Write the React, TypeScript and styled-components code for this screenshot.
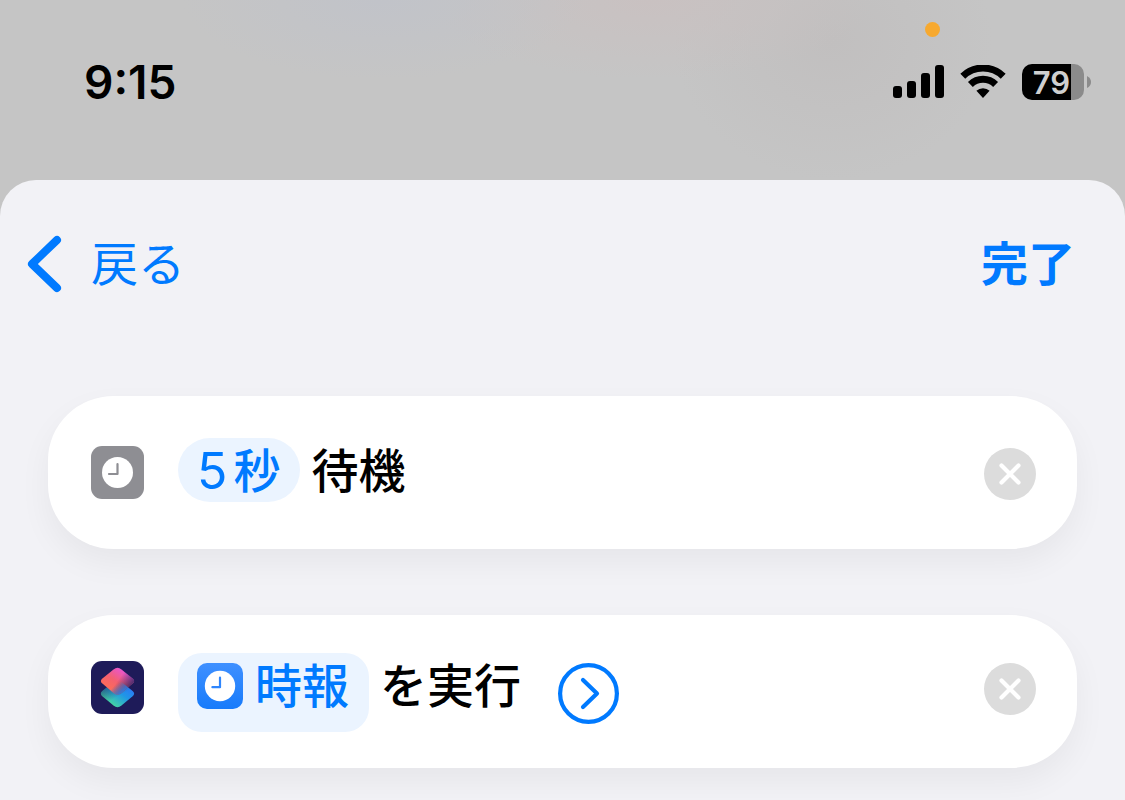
import React from "react";
import styled, { createGlobalStyle } from "styled-components";

const BLUE = "#007aff";

const GlobalStyle = createGlobalStyle`
  *, *::before, *::after { box-sizing: border-box; }
  body {
    margin: 0;
    background: #c5c5c5;
    font-family: Inter, "Noto Sans CJK JP", sans-serif;
    color: #000;
  }
  button { font: inherit; border: 0; padding: 0; background: none; cursor: pointer; }
  svg { display: block; }
`;

const Screen = styled.div`
  display: flex;
  flex-direction: column;
  min-height: 100vh;
  overflow: hidden;
  background:
    radial-gradient(ellipse 200px 80px at 34% 0, #c1c3c9, transparent),
    radial-gradient(ellipse 220px 80px at 58% 0, #c9c1c1, transparent),
    radial-gradient(ellipse 160px 140px at 74% 40px, #c1bfbf, transparent),
    #c5c5c5;
`;

const StatusBar = styled.header`
  position: relative;
  display: flex;
  justify-content: space-between;
  height: 180px;
  padding: 56px 34px 0 84px;
`;

const Time = styled.time`
  font-size: 46px;
  line-height: 52px;
  font-weight: 600;
`;

const StatusIcons = styled.div`
  display: flex;
  align-items: center;
  gap: 16px;
  height: 52px;
`;

const Battery = styled.div`
  display: flex;
  align-items: center;
  gap: 3px;
`;

const BatteryBody = styled.div`
  width: 62px;
  height: 36px;
  padding-right: 3px;
  border-radius: 10px;
  background: linear-gradient(to right, #000 49px, #8b8b8b 49px);
  color: #cfcfcf;
  font-size: 31px;
  line-height: 37px;
  font-weight: 600;
  text-align: center;
`;

const MicDot = styled.span`
  position: absolute;
  top: 22px;
  right: 185px;
  width: 15px;
  height: 15px;
  border-radius: 50%;
  background: #f7a92f;
`;

const Sheet = styled.main`
  flex: 1;
  border-radius: 36px 36px 0 0;
  background: #f2f2f6;
`;

const NavBar = styled.nav`
  display: flex;
  align-items: center;
  justify-content: space-between;
  height: 168px;
  padding: 0 50px 0 26px;
`;

const NavButton = styled.button<{ $strong?: boolean }>`
  display: flex;
  align-items: center;
  gap: 28px;
  color: ${BLUE};
  font-size: 47px;
  line-height: 64px;
  font-weight: ${(p) => (p.$strong ? 700 : 400)};
`;

const ActionList = styled.ul`
  display: flex;
  flex-direction: column;
  gap: 66px;
  margin: 0;
  padding: 48px 48px 32px;
  list-style: none;
`;

const ActionCard = styled.li<{ $top: number }>`
  display: flex;
  align-items: flex-start;
  min-height: 153px;
  padding: ${(p) => p.$top}px 41px 0 43px;
  border-radius: 66px / 64px;
  background: #fff;
  box-shadow: 0 14px 32px rgba(0, 0, 0, 0.05);
`;

const AppIcon = styled.span`
  margin: 8px 34px 0 0;
`;

const Sentence = styled.div`
  display: flex;
  flex: 1;
  align-items: flex-start;
  gap: 11px;
  font-size: 47px;
  line-height: 66px;
  font-weight: 500;
  white-space: nowrap;
`;

const Token = styled.button<{ $tall?: boolean }>`
  display: flex;
  align-items: flex-start;
  gap: ${(p) => (p.$tall ? 12 : 6)}px;
  height: ${(p) => (p.$tall ? 79 : 64)}px;
  padding: 0 20px 0 19px;
  border-radius: ${(p) => (p.$tall ? 24 : 32)}px;
  background: #ebf4ff;
  color: ${BLUE};
`;

const Digit = styled.span`
  font-size: 50px;
  font-weight: 400;
`;

const TokenIcon = styled.span`
  margin-top: 10px;
`;

const RoundButton = styled.button`
  margin-top: 10px;
`;

const ExpandButton = styled(RoundButton)`
  margin-left: 26px;
`;

function Signal() {
  return (
    <svg width="51" height="34" viewBox="0 0 51 34" aria-label="電波">
      <rect x="0" y="21" width="9" height="12" rx="3" />
      <rect x="14" y="16" width="9" height="17" rx="3" />
      <rect x="28" y="8" width="9" height="25" rx="3" />
      <rect x="42" y="0" width="9" height="33" rx="3" />
    </svg>
  );
}

function Wifi() {
  return (
    <svg width="46" height="34" viewBox="0 0 46 34" aria-label="Wi-Fi">
      <g fill="none" stroke="#000" strokeWidth="7">
        <path d="M2.800 11.200a29 29 0 0 1 40.400 0" />
        <path d="M10.400 19.400a18 18 0 0 1 25.200 0" />
      </g>
      <path d="M16.400 25.800a9.600 9.600 0 0 1 13.200 0L23 33z" />
    </svg>
  );
}

function BackChevron() {
  return (
    <svg width="37" height="58" viewBox="0 0 37 58" aria-hidden="true">
      <path d="M31 5 6 29l25 24" fill="none" stroke={BLUE} strokeWidth="8" strokeLinecap="round" strokeLinejoin="round" />
    </svg>
  );
}

function WaitIcon() {
  return (
    <svg width="53" height="53" viewBox="0 0 53 53" aria-hidden="true">
      <rect width="53" height="53" rx="11" fill="#8e8e93" />
      <circle cx="26.5" cy="26.5" r="15.5" fill="#fff" />
      <path d="M26.5 18v10H18" fill="none" stroke="#8e8e93" strokeWidth="2.2" strokeLinecap="round" strokeLinejoin="round" />
    </svg>
  );
}

function ClockTile() {
  return (
    <svg width="46" height="46" viewBox="0 0 46 46" aria-hidden="true">
      <defs>
        <linearGradient id="tile" x1="0" y1="0" x2="0" y2="1">
          <stop offset="0" stopColor="#3f90ff" />
          <stop offset="1" stopColor="#177bfb" />
        </linearGradient>
      </defs>
      <rect width="46" height="46" rx="10" fill="url(#tile)" />
      <circle cx="23" cy="23" r="15.2" fill="#fff" />
      <path d="M23 14.5v9.7h-7.6" fill="none" stroke="#2f86fd" strokeWidth="2.2" strokeLinecap="round" strokeLinejoin="round" />
    </svg>
  );
}

const LOWER = "M22.500 21 11.400 30q-3 2.600 0 5.200L22.500 44.600q4 3.200 8 0L41.600 35.200q3-2.600 0-5.200L30.500 21q-4-3.200-8 0z";
const UPPER = "M22.500 8.400 11.400 17.400q-3 2.600 0 5.200L22.500 32q4 3.200 8 0L41.600 22.600q3-2.600 0-5.200L30.500 8.400q-4-3.200-8 0z";

function ShortcutsIcon() {
  return (
    <svg width="53" height="53" viewBox="0 0 53 53" aria-hidden="true">
      <defs>
        <linearGradient id="lower" gradientUnits="userSpaceOnUse" x1="38" y1="26" x2="23" y2="46">
          <stop offset="0" stopColor="#2b7af5" />
          <stop offset="0.4" stopColor="#1f97e6" />
          <stop offset="1" stopColor="#46d6a0" />
        </linearGradient>
        <linearGradient id="lowerShade" gradientUnits="userSpaceOnUse" x1="13" y1="25" x2="21" y2="39">
          <stop offset="0" stopColor="#1e1f5a" stopOpacity="0.6" />
          <stop offset="1" stopColor="#1e1f5a" stopOpacity="0" />
        </linearGradient>
        <linearGradient id="upper" gradientUnits="userSpaceOnUse" x1="30" y1="8" x2="18" y2="26">
          <stop offset="0" stopColor="#e956cd" />
          <stop offset="0.6" stopColor="#f4606f" />
          <stop offset="1" stopColor="#fa6a5c" />
        </linearGradient>
        <linearGradient id="upperShade" gradientUnits="userSpaceOnUse" x1="30" y1="15" x2="41" y2="23">
          <stop offset="0" stopColor="#1e1f5a" stopOpacity="0" />
          <stop offset="1" stopColor="#1e1f5a" stopOpacity="0.75" />
        </linearGradient>
        <linearGradient id="join" gradientUnits="userSpaceOnUse" x1="25" y1="24" x2="32" y2="33">
          <stop offset="0" stopColor="#2785f0" stopOpacity="0" />
          <stop offset="1" stopColor="#2785f0" />
        </linearGradient>
        <clipPath id="upperClip">
          <path d={UPPER} />
        </clipPath>
      </defs>
      <rect width="53" height="53" rx="11" fill="#1e1b59" />
      <path d={LOWER} fill="url(#lower)" />
      <path d={LOWER} fill="url(#lowerShade)" />
      <path d={UPPER} fill="url(#upper)" />
      <path d={UPPER} fill="url(#upperShade)" />
      <path d={LOWER} fill="url(#join)" clipPath="url(#upperClip)" />
    </svg>
  );
}

function CloseIcon() {
  return (
    <svg width="52" height="52" viewBox="0 0 52 52" aria-hidden="true">
      <circle cx="26" cy="26" r="26" fill="#dcdcdc" />
      <path d="m17.500 17.500 17 17m0-17-17 17" stroke="#fff" strokeWidth="4.200" strokeLinecap="round" />
    </svg>
  );
}

function ExpandIcon() {
  return (
    <svg width="61" height="61" viewBox="0 0 61 61" aria-hidden="true">
      <g fill="none" stroke={BLUE} strokeWidth="4.200" strokeLinecap="round" strokeLinejoin="round">
        <circle cx="30.500" cy="30.500" r="28.400" />
        <path d="m25 17 14 13.500L25 44" />
      </g>
    </svg>
  );
}

export default function App() {
  return (
    <Screen>
      <GlobalStyle />
      <StatusBar>
        <Time>9:15</Time>
        <MicDot />
        <StatusIcons>
          <Signal />
          <Wifi />
          <Battery>
            <BatteryBody>79</BatteryBody>
            <svg width="4" height="12" viewBox="0 0 4 12" aria-hidden="true">
              <path d="M0 0q4 2 4 6t-4 6z" fill="#8b8b8b" />
            </svg>
          </Battery>
        </StatusIcons>
      </StatusBar>
      <Sheet>
        <NavBar>
          <NavButton type="button">
            <BackChevron />
            戻る
          </NavButton>
          <NavButton type="button" $strong>
            完了
          </NavButton>
        </NavBar>
        <ActionList>
          <ActionCard $top={42}>
            <AppIcon>
              <WaitIcon />
            </AppIcon>
            <Sentence>
              <Token type="button">
                <Digit>5</Digit>
                <span>秒</span>
              </Token>
              <span>待機</span>
            </Sentence>
            <RoundButton type="button" aria-label="待機を削除">
              <CloseIcon />
            </RoundButton>
          </ActionCard>
          <ActionCard $top={38}>
            <AppIcon>
              <ShortcutsIcon />
            </AppIcon>
            <Sentence>
              <Token type="button" $tall>
                <TokenIcon>
                  <ClockTile />
                </TokenIcon>
                <span>時報</span>
              </Token>
              <span>を実行</span>
              <ExpandButton type="button" aria-label="詳細を表示">
                <ExpandIcon />
              </ExpandButton>
            </Sentence>
            <RoundButton type="button" aria-label="時報を実行を削除">
              <CloseIcon />
            </RoundButton>
          </ActionCard>
        </ActionList>
      </Sheet>
    </Screen>
  );
}
